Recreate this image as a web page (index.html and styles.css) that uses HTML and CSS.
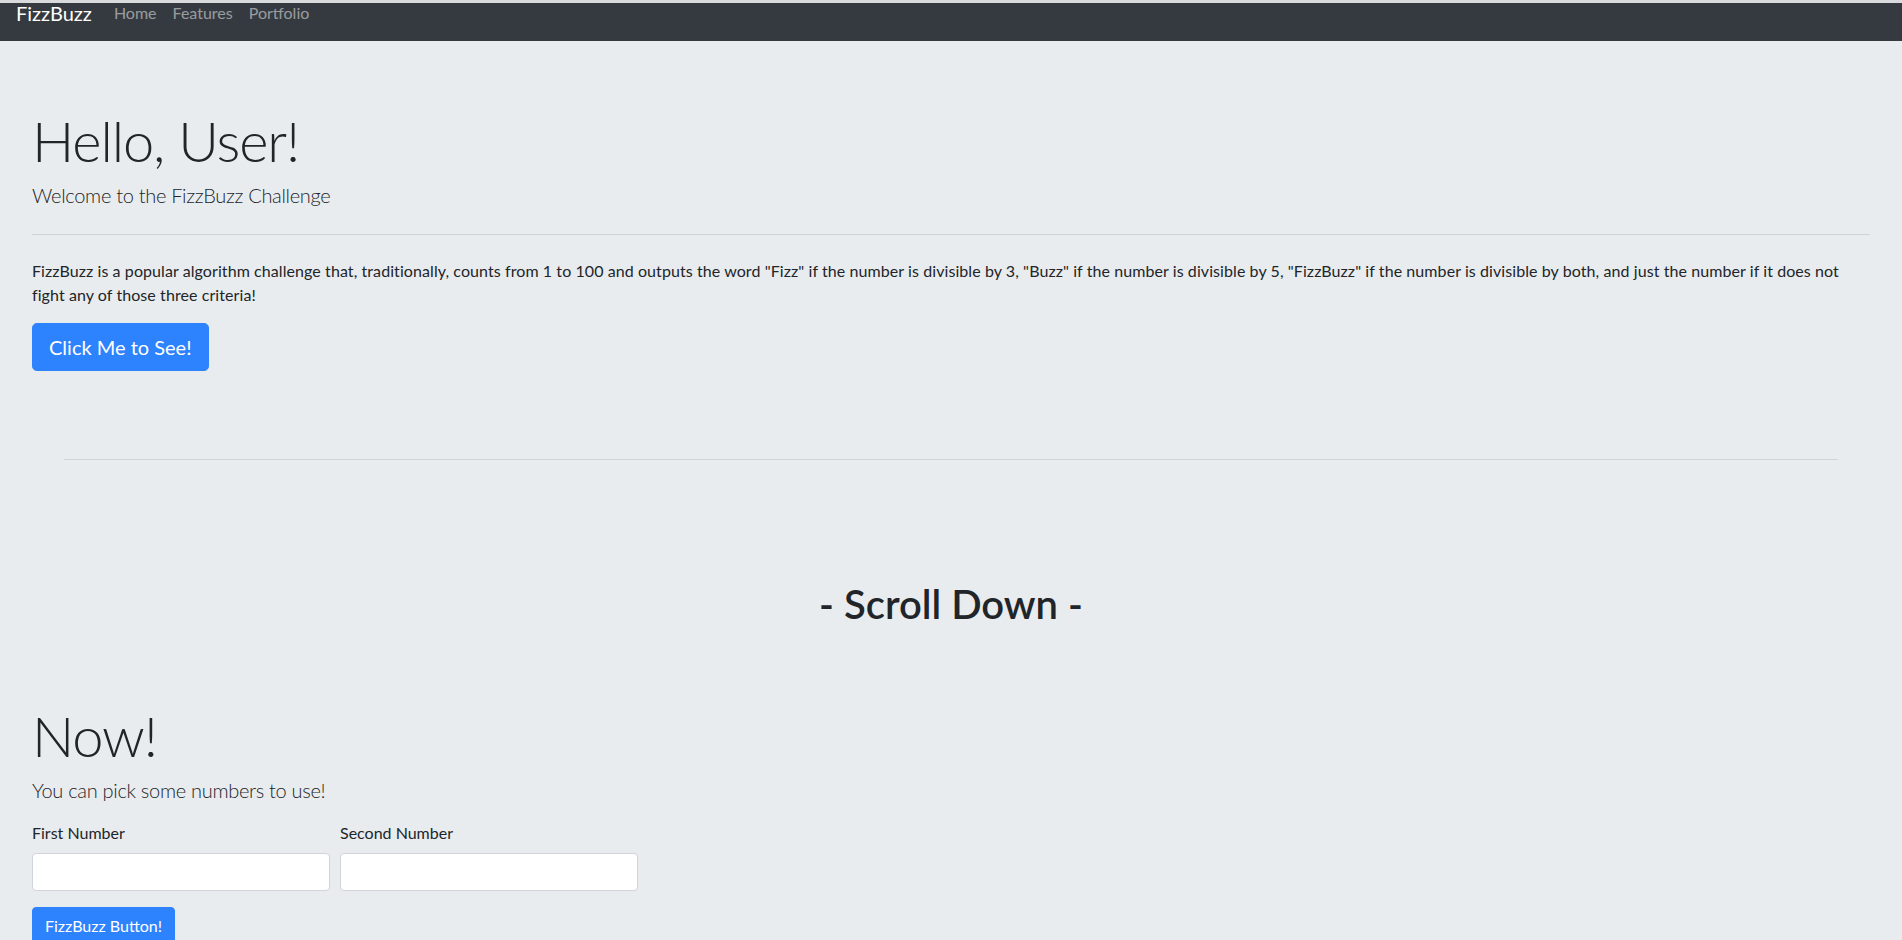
FILE: index.html
```html
<!DOCTYPE html>
<html lang="en">
<head>
<meta charset="utf-8">
<title>FizzBuzz</title>
<link rel="stylesheet" href="styles.css">
</head>
<body>
<nav class="navbar">
  <a class="brand" href="#">FizzBuzz</a>
  <ul class="nav-links">
    <li><a href="#">Home</a></li>
    <li><a href="#">Features</a></li>
    <li><a href="#">Portfolio</a></li>
  </ul>
</nav>

<header class="jumbotron">
  <h1 class="display hello">Hello, User!</h1>
  <p class="lead">Welcome to the FizzBuzz Challenge</p>
  <hr class="rule">
  <p class="intro">FizzBuzz is a popular algorithm challenge that, traditionally, counts from 1 to 100 and outputs the word "Fizz" if the number is divisible by 3, "Buzz" if the number is divisible by 5, "FizzBuzz" if the number is divisible by both, and just the number if it does not fight any of those three criteria!</p>
  <a class="btn btn-lg" href="#">Click Me to See!</a>
</header>

<main class="content">
  <hr class="rule divider">
  <h2 class="scroll">- Scroll Down -</h2>
  <h1 class="display now">Now!</h1>
  <p class="lead pick">You can pick some numbers to use!</p>
  <form class="fizz-form">
    <div class="form-row">
      <div class="field">
        <label for="first">First Number</label>
        <input id="first" type="text" class="input">
      </div>
      <div class="field">
        <label for="second">Second Number</label>
        <input id="second" type="text" class="input">
      </div>
    </div>
    <button type="button" class="btn btn-sm">FizzBuzz Button!</button>
  </form>
</main>
</body>
</html>
```
FILE: styles.css
```css
* { box-sizing: border-box; }

html, body {
  margin: 0;
  padding: 0;
}

body {
  background: #e9ecef;
  color: #212529;
  font-family: "Lato", "Liberation Sans", sans-serif;
  font-size: 16px;
  line-height: 24px;
}

/* Navbar */
.navbar {
  position: relative;
  display: flex;
  align-items: flex-start;
  height: 41px;
  padding: 1px 16px 0;
  background: #343a40;
}
.navbar::before {
  content: "";
  position: absolute;
  top: 0;
  left: 0;
  right: 0;
  height: 3px;
  background: #d9dadc;
}
.brand {
  position: relative;
  color: #ffffff;
  font-size: 20px;
  line-height: 24px;
  text-decoration: none;
  margin-right: 14px;
}
.nav-links {
  display: flex;
  list-style: none;
  margin: 0;
  padding: 0;
}
.nav-links a {
  position: relative;
  display: block;
  padding: 0 8px;
  color: rgba(255, 255, 255, 0.5);
  text-decoration: none;
  font-size: 16px;
  line-height: 24px;
}

/* Jumbotron */
.jumbotron {
  padding: 66px 32px 64px;
}
.display {
  margin: 0;
  font-size: 56px;
  font-weight: 300;
  line-height: 1.2;
  letter-spacing: -1.1px;
}
.hello {
  margin-bottom: 6px;
}
.lead {
  margin: 0;
  font-size: 20px;
  font-weight: 300;
  line-height: 30px;
  letter-spacing: -0.3px;
}
.rule {
  height: 0;
  margin: 24px 0 24px;
  border: 0;
  border-top: 1px solid rgba(0, 0, 0, 0.1);
}
.intro {
  margin: 0 0 16px;
  letter-spacing: 0.08px;
}

.btn {
  display: inline-block;
  border: 1px solid #2d82fe;
  background: #2d82fe;
  color: #ffffff;
  font-family: inherit;
  text-decoration: none;
  cursor: pointer;
}
.btn-lg {
  padding: 8px 16px;
  font-size: 20px;
  line-height: 30px;
  border-radius: 4.8px;
}
.btn-sm {
  padding: 6px 12px;
  font-size: 16px;
  line-height: 24px;
  border-radius: 4px;
}

/* Lower content */
.content {
  padding: 0 32px;
}
.divider {
  margin: 24px 32px 0;
}
.scroll {
  margin: 120px 0 0;
  text-align: center;
  font-size: 40px;
  font-weight: 600;
  line-height: 1.2;
}
.now {
  margin-top: 74px;
  margin-bottom: 6px;
}
.pick {
  margin-bottom: 16px;
}
.form-row {
  display: grid;
  grid-template-columns: repeat(6, 1fr);
  column-gap: 10px;
  margin-bottom: 16px;
}
.field label {
  display: block;
  margin-bottom: 8px;
}
.input {
  display: block;
  width: 100%;
  height: 38px;
  padding: 6px 12px;
  border: 1px solid #ced4da;
  border-radius: 4px;
  background: #ffffff;
  font-family: inherit;
  font-size: 16px;
}
```
